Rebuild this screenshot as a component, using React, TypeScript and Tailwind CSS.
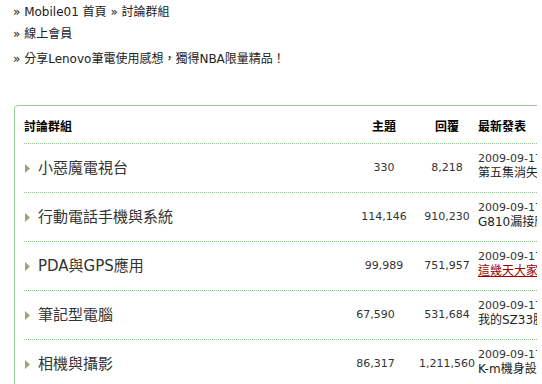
import React from "react";

const rows = [
  { name: "小惡魔電視台", topics: "330", replies: "8,218", date: "2009-09-17 12:30", last: "第五集消失的小惡魔", red: false, tpr: "" },
  { name: "行動電話手機與系統", topics: "114,146", replies: "910,230", date: "2009-09-17 12:31", last: "G810漏接應該怎麼辦", red: false, tpr: "" },
  { name: "PDA與GPS應用", topics: "99,989", replies: "751,957", date: "2009-09-17 12:29", last: "這幾天大家的導航", red: true, tpr: "" },
  { name: "筆記型電腦", topics: "67,590", replies: "531,684", date: "2009-09-17 12:32", last: "我的SZ33胖胖", red: false, tpr: "pr-[17px]" },
  { name: "相機與攝影", topics: "86,317", replies: "1,211,560", date: "2009-09-17 12:33", last: "K-m機身設定", red: false, tpr: "pr-[17px]" },
];

const font = { fontFamily: '"DejaVu Sans", "Noto Sans CJK TC", sans-serif' };

function Arrow() {
  return (
    <svg width="5" height="9" viewBox="0 0 5 9" className="shrink-0">
      <polygon points="0,0 5,4.5 0,9" fill="#95a872" />
    </svg>
  );
}

export default function App() {
  return (
    <div className="w-[542px] h-[384px] overflow-hidden bg-white text-[#333]" style={font}>
      <div className="w-[537px] h-[384px] overflow-hidden">
        <div className="pl-[13px] pt-[4px] text-[12px] leading-4 text-[#222]">
          <div>» Mobile01 首頁 » 討論群組</div>
          <div className="mt-[6px]">» 線上會員</div>
          <div className="mt-[9px]">» 分享Lenovo筆電使用感想，獨得NBA限量精品！</div>
        </div>
        <div className="ml-[14px] mt-[38px] w-[700px] border border-[#99cc99] rounded-tl-[4px] pl-[9px] pb-4">
          <div className="h-[37px] flex items-end pb-[8px] text-[12px] leading-4 font-bold text-black">
            <div className="w-[326px]">討論群組</div>
            <div className="w-[68px] text-center">主題</div>
            <div className="w-[58px] text-center">回覆</div>
            <div className="pl-[2px]">最新發表</div>
          </div>
          {rows.map((r) => (
            <div key={r.name} className="h-[49px] border-t border-dotted border-[#88c888] flex items-center">
              <div className="w-[326px] flex items-center gap-[8px] pl-[1px] text-[15px] leading-5 text-[#333]">
                <Arrow />
                <span>{r.name}</span>
              </div>
              <div className={`w-[68px] text-center text-[11px] ${r.tpr}`}>{r.topics}</div>
              <div className="w-[58px] text-center text-[11px] whitespace-nowrap">{r.replies}</div>
              <div className="pl-[2px] -mt-[4px] whitespace-nowrap">
                <div className="text-[11px] leading-[15px]">{r.date}</div>
                {r.red ? (
                  <div className="text-[12px] leading-[15px] text-[#990000] underline">{r.last}</div>
                ) : (
                  <div className="text-[12px] leading-[15px] text-[#222]">{r.last}</div>
                )}
              </div>
            </div>
          ))}
        </div>
      </div>
    </div>
  );
}
